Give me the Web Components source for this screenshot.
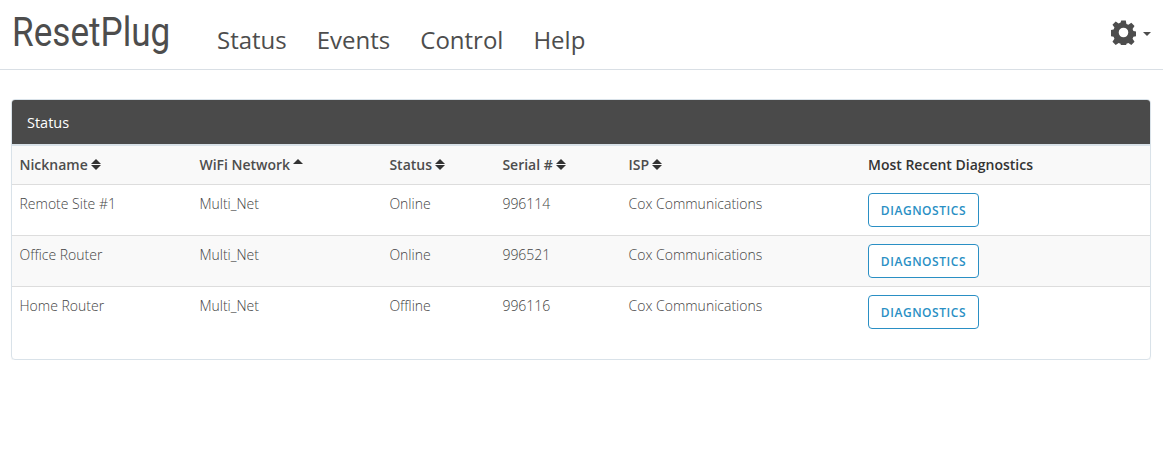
<!DOCTYPE html>
<html>
<head>
<meta charset="utf-8">
<title>ResetPlug</title>
<style>
  html, body { margin: 0; background: #fff; font-family: "Open Sans", sans-serif; color: #4d4d4d; }
</style>
</head>
<body>
<top-nav>
  <a>Status</a>
  <a>Events</a>
  <a>Control</a>
  <a>Help</a>
</top-nav>
<status-panel heading="Status">
  <device-row nickname="Remote Site #1" network="Multi_Net" state="Online" serial="996114" isp="Cox Communications"></device-row>
  <device-row nickname="Office Router" network="Multi_Net" state="Online" serial="996521" isp="Cox Communications" striped></device-row>
  <device-row nickname="Home Router" network="Multi_Net" state="Offline" serial="996116" isp="Cox Communications"></device-row>
</status-panel>

<script>
// shared column template, the header and the rows have to line up
var COLUMNS = "grid-template-columns: 179.900px 190px 113px 126.100px 239.500px 1fr;";

var template_nav = document.createElement("template");
template_nav.innerHTML = `
<style>
  :host { display: flex; align-items: flex-start; height: 69px; border-bottom: 1px solid #d9dfe5; padding: 0 12px 0 12px; }
  .brand { font: 400 40px/46px Roboto, sans-serif; color: #4d4d4d; display: inline-block; width: 158px; margin-top: 10px; }
  .brand span { display: inline-block; transform: scaleX(.878); transform-origin: 0 50%; white-space: nowrap; }
  nav { display: flex; gap: 30px; margin: 23px 0 0 47px; font-size: 24px; line-height: 33px; }
  .gear { margin-left: auto; margin-top: 20px; display: flex; align-items: center; gap: 7px; height: 25px; }
  .caret { width: 0; height: 0; border: 4px solid transparent; border-top-color: #4d4d4d; border-bottom: 0; margin-top: 3px; }
  svg { display: block; }
  ::slotted(a) { color: #4d4d4d; }
</style>
<div class="brand"><span>ResetPlug</span></div>
<nav><slot></slot></nav>
<div class="gear">
  <svg width="25" height="25" viewBox="0 0 24 24" fill="#4d4d4d"><path fill-rule="evenodd" d="M9.800 .5h4.400l.6 3.300 1.900.8 2.800-1.900 3.100 3.100-1.900 2.800.8 1.900 3.300.6v4.400l-3.300.6-.8 1.900 1.900 2.800-3.100 3.100-2.800-1.900-1.900.8-.6 3.300H9.800l-.6-3.300-1.900-.8-2.800 1.900-3.100-3.100 1.900-2.800-.8-1.900-3.300-.6V9.800l3.300-.6.8-1.900-1.900-2.800 3.100-3.100 2.800 1.900 1.900-.8zM12 7.400a4.600 4.600 0 1 0 0 9.200 4.600 4.600 0 0 0 0-9.200z"/></svg>
  <span class="caret"></span>
</div>
`;
class TopNav extends HTMLElement {
  constructor() {
    super();
    this.attachShadow({ mode: "open" });
    this.shadowRoot.appendChild(template_nav.content.cloneNode(true));
  }
}
customElements.define("top-nav", TopNav);

var template_sort = document.createElement("template");
template_sort.innerHTML = `
<style>
  :host { display: inline-flex; flex-direction: column; gap: 1px; margin-left: 3px; }
  i { display: block; width: 0; height: 0; border-left: 5px solid transparent; border-right: 5px solid transparent; }
  .up { border-bottom: 5px solid #333; }
  .down { border-top: 5px solid #333; }
  :host([dir-up]) .down { visibility: hidden; }
</style>
<i class="up"></i><i class="down"></i>
`;
class SortIcon extends HTMLElement {
  constructor() {
    super();
    this.attachShadow({ mode: "open" });
    this.shadowRoot.appendChild(template_sort.content.cloneNode(true));
  }
}
customElements.define("sort-icon", SortIcon);

var template_panel = document.createElement("template");
template_panel.innerHTML = `
<style>
  :host { display: block; margin: 29px 12px 0 11px; height: 259px; border: 1px solid #d9e2e9; border-radius: 4px; box-shadow: 0 1px 1px rgba(0,0,0,.05); }
  .title { background: #4a4a4a; color: #fff; height: 44px; line-height: 45px; padding-left: 15px; font-size: 14.500px; border-radius: 3px 3px 0 0; }
  .head { display: grid; ${COLUMNS} height: 38px; align-items: center; padding-left: 7.500px; background: #f9f9f9; border-top: 2px solid #d9e2e9; border-bottom: 1px solid #ddd; font-size: 14px; font-weight: 600; color: #4d4d4d; }
  .head div { display: flex; align-items: center; height: 38px; padding-bottom: 1px; box-sizing: border-box; }
  .head .last { color: #333; }
</style>
<div class="title"></div>
<div class="head">
  <div>Nickname<sort-icon></sort-icon></div>
  <div>WiFi Network<sort-icon dir-up></sort-icon></div>
  <div>Status<sort-icon></sort-icon></div>
  <div>Serial #<sort-icon></sort-icon></div>
  <div>ISP<sort-icon></sort-icon></div>
  <div class="last">Most Recent Diagnostics</div>
</div>
<slot></slot>
`;
class StatusPanel extends HTMLElement {
  constructor() {
    super();
    this.attachShadow({ mode: "open" });
    this.shadowRoot.appendChild(template_panel.content.cloneNode(true));
  }
  connectedCallback() {
    this.shadowRoot.querySelector(".title").textContent = this.getAttribute("heading");
  }
}
customElements.define("status-panel", StatusPanel);

var template_row = document.createElement("template");
template_row.innerHTML = `
<style>
  :host { display: grid; ${COLUMNS} padding: 8px 0 0 7.500px; box-sizing: border-box; height: 51px; border-bottom: 1px solid #ddd; font-size: 14px; font-weight: 300; line-height: 20px; color: #444; }
  :host([striped]) { background: #f9f9f9; }
  :host(:last-child) { border-bottom: 0; }
  .c { padding-top: 1px; }
  button { display: block; font: 600 12px "Open Sans", sans-serif; color: #2a8fc4; background: #fff; border: 1px solid #2a8fc4; border-radius: 4px; width: 111px; height: 34px; padding: 0; letter-spacing: .55px; }
</style>
<div class="c"></div><div class="c"></div><div class="c"></div><div class="c"></div><div class="c"></div>
<div><button>DIAGNOSTICS</button></div>
`;
class DeviceRow extends HTMLElement {
  constructor() {
    super();
    this.attachShadow({ mode: "open" });
    this.shadowRoot.appendChild(template_row.content.cloneNode(true));
  }
  connectedCallback() {
    var keys = ["nickname", "network", "state", "serial", "isp"];
    var cells = this.shadowRoot.querySelectorAll(".c");
    keys.forEach((k, i) => { cells[i].textContent = this.getAttribute(k); });
  }
}
customElements.define("device-row", DeviceRow);
</script>
</body>
</html>
